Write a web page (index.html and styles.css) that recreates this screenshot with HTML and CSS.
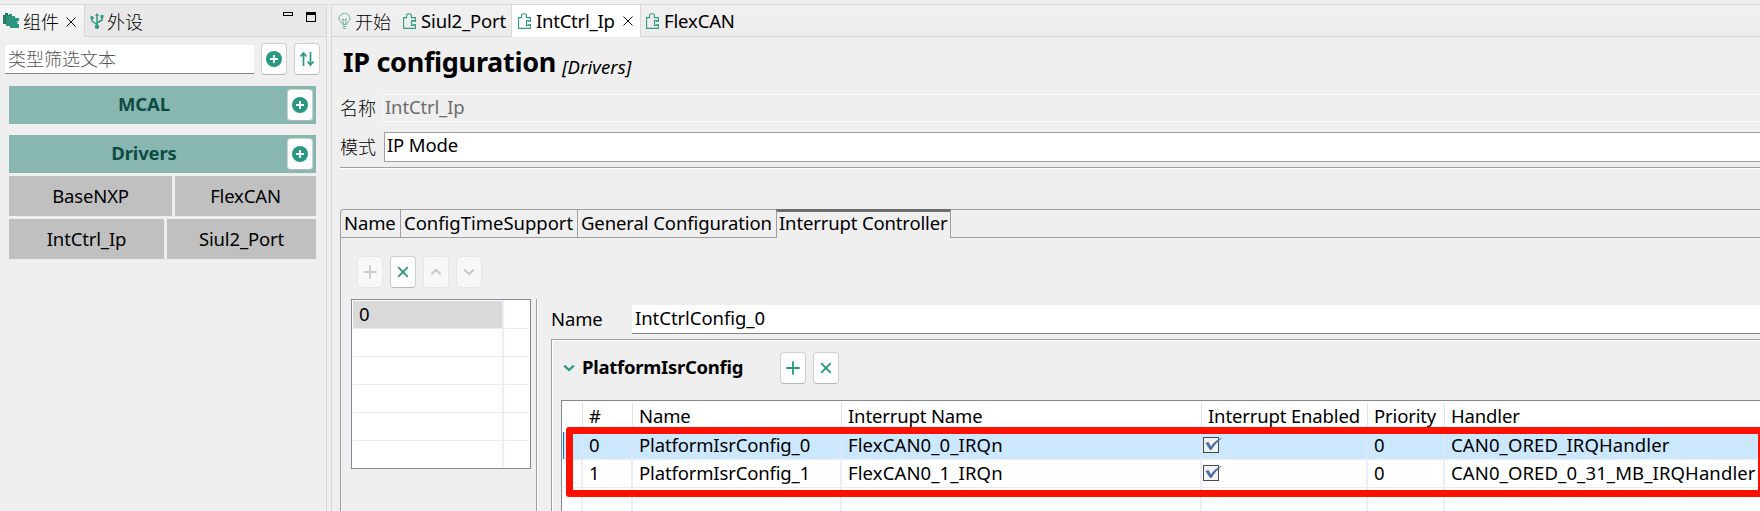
FILE: index.html
```
<!DOCTYPE html>
<html lang="zh">
<head>
<meta charset="utf-8">
<title>IP configuration</title>
<link rel="stylesheet" href="styles.css">
</head>
<body>
<svg class="defs" width="0" height="0">
  <symbol id="puzzle" viewBox="0 0 13 16"><path d="M.6 4.600H3.600V2.500Q3.600 .800 6 .800T8.400 2.500V4.600H12.400V8.400H11V7.600H8.500V12.400H11V11.600H12.400V15.400H.6Z" fill="none" stroke="#339a83" stroke-width="1.1"/></symbol>
  <symbol id="plus-circle" viewBox="0 0 16 16"><circle cx="8" cy="8" r="8" fill="#2a9880"/><path d="M8 4V12M4 8H12" stroke="#fff" stroke-width="1.8"/></symbol>
  <symbol id="plus" viewBox="0 0 14 14"><path d="M7 .3V13.7M.3 7H13.7" stroke="currentColor" stroke-width="1.8"/></symbol>
  <symbol id="cross" viewBox="0 0 12 12"><path d="M1.2 1.2 10.8 10.8M10.8 1.2 1.2 10.8" stroke="currentColor" stroke-width="1.9"/></symbol>
  <symbol id="down" viewBox="0 0 12 8"><path d="M1.2 1.6 6 6 10.8 1.6" fill="none" stroke="currentColor" stroke-width="2.2"/></symbol>
  <symbol id="up" viewBox="0 0 12 8"><path d="M1.2 6.4 6 2 10.8 6.4" fill="none" stroke="currentColor" stroke-width="2.2"/></symbol>
  <symbol id="close" viewBox="0 0 10 10"><path d="M.5 .5 9.5 9.5M9.5 .5 .5 9.5" stroke="#111" stroke-width="1"/></symbol>
  <symbol id="check" viewBox="0 0 20 18"><rect x=".5" y="2.5" width="15" height="15" fill="#f3f3f3" stroke="#4a4a4a"/><path d="M2.500 8 5.500 7 8 11.500Q12 5 19.500 2.500Q12.500 8 8.500 15H7Z" fill="#4a6fa5"/></symbol>
</svg>
<div class="app">
  <aside class="side">
    <div class="side-tabs">
      <div class="side-tab active">
        <svg class="i-comp" viewBox="0 0 17 16"><path d="M0 2H2V0H5V2H7V11H0Z" fill="#1f7d68"/><path d="M4 3H6V1H9V3H12V13H3V4Z" fill="#2f8f79"/><path d="M7 5H9V3H12V5H16V8H14.500V11H16V15H7Z" fill="#2a9880"/></svg>
        <span class="cjk">组件</span>
        <svg class="i-close"><use href="#close"/></svg>
      </div>
      <div class="side-rest">
        <svg class="i-usb" viewBox="0 0 14 16"><g fill="none" stroke="#339a83" stroke-width="1.5"><path d="M7 2V14M2 5V8L7 11.500M12 4V7L7 10"/></g><path d="M7 0 9 3H5Z" fill="#339a83"/><circle cx="7" cy="13.700" r="2.200" fill="#339a83"/><circle cx="2" cy="4.700" r="1.700" fill="#339a83"/><rect x="10.500" y="2" width="3" height="3" fill="#339a83"/></svg>
        <span class="cjk">外设</span>
        <i class="w-min"></i><i class="w-max"></i>
      </div>
    </div>
    <div class="filter">
      <div class="filter-in cjk">类型筛选文本</div>
      <div class="btn"><svg class="s16"><use href="#plus-circle"/></svg></div>
      <div class="btn"><svg class="i-sort" viewBox="0 0 14 16"><path d="M3.500 15V3M.5 5.500 3.500 2 6.500 5.500M10.500 1V13M7.500 10.500 10.500 14 13.500 10.500" fill="none" stroke="#2a9880" stroke-width="1.700"/></svg></div>
    </div>
    <div class="cat"><b>MCAL</b><div class="btn"><svg class="s16"><use href="#plus-circle"/></svg></div></div>
    <div class="cat second"><b>Drivers</b><div class="btn"><svg class="s16"><use href="#plus-circle"/></svg></div></div>
    <div class="comps"><div class="comp c-base">BaseNXP</div><div class="comp">FlexCAN</div></div>
    <div class="comps"><div class="comp c-int">IntCtrl_Ip</div><div class="comp">Siul2_Port</div></div>
  </aside>
  <main class="editor">
    <nav class="ed-tabs">
      <div class="ed-tab t-start"><svg class="i-bulb" viewBox="0 0 13 16"><g fill="none" stroke="#6db3a4" stroke-width="1"><path d="M4.500 11.500C4.500 9.500 1 8.500 1 5.500A5.300 5 0 0 1 12 5.500C12 8.500 8.500 9.500 8.500 11.500ZM4.500 13.500H8.500M5 15.400H8M5.500 11 4.500 6 6.500 7 8.500 6 7.500 11"/></g></svg><span class="cjk">开始</span></div>
      <div class="ed-tab t-port"><svg class="i-puz"><use href="#puzzle"/></svg><span>Siul2_Port</span></div>
      <div class="ed-tab t-int"><svg class="i-puz"><use href="#puzzle"/></svg><span>IntCtrl_Ip</span><svg class="i-close"><use href="#close"/></svg></div>
      <div class="ed-tab t-flex"><svg class="i-puz"><use href="#puzzle"/></svg><span>FlexCAN</span></div>
    </nav>
    <header class="title"><h1>IP configuration</h1><em>[Drivers]</em></header>
    <div class="row r-name"><span class="lab cjk">名称</span><div class="ro">IntCtrl_Ip</div></div>
    <div class="row r-mode"><span class="lab cjk">模式</span><div class="combo">IP Mode</div></div>
    <div class="tabs"><div class="tab t1"><span>Name</span></div><div class="tab t2"><span>ConfigTimeSupport</span></div><div class="tab t3"><span>General Configuration</span></div><div class="tab t4"><span>Interrupt Controller</span></div><div class="tab-rest"></div></div>
    <section class="page">
      <div class="tools">
        <div class="btn off"><svg class="s14"><use href="#plus"/></svg></div>
        <div class="btn"><svg class="s12"><use href="#cross"/></svg></div>
        <div class="btn off"><svg class="chev"><use href="#up"/></svg></div>
        <div class="btn off"><svg class="chev"><use href="#down"/></svg></div>
      </div>
      <div class="split">
        <div class="list">
          <div class="li sel"><span>0</span><i></i></div>
          <div class="li"><span></span><i></i></div><div class="li"><span></span><i></i></div><div class="li"><span></span><i></i></div><div class="li"><span></span><i></i></div>
          <div class="li last"><span></span><i></i></div>
        </div>
        <div class="detail">
          <div class="name-row"><span class="name-lab">Name</span><div class="name-in">IntCtrlConfig_0</div></div>
          <div class="group">
            <div class="g-head"><svg class="g-chev"><use href="#down"/></svg><b>PlatformIsrConfig</b><div class="btn"><svg class="s14"><use href="#plus"/></svg></div><div class="btn"><svg class="s12"><use href="#cross"/></svg></div></div>
            <div class="table">
              <div class="tr th"><div></div><div>#</div><div>Name</div><div>Interrupt Name</div><div>Interrupt Enabled</div><div>Priority</div><div>Handler</div></div>
              <div class="tr on"><div></div><div>0</div><div>PlatformIsrConfig_0</div><div class="wide">FlexCAN0_0_IRQn</div><div class="ck"><svg><use href="#check"/></svg></div><div>0</div><div class="wide">CAN0_ORED_IRQHandler</div></div>
              <div class="tr"><div></div><div>1</div><div>PlatformIsrConfig_1</div><div class="wide">FlexCAN0_1_IRQn</div><div class="ck"><svg><use href="#check"/></svg></div><div>0</div><div class="wide">CAN0_ORED_0_31_MB_IRQHandler</div></div>
              <div class="tr"><div></div><div></div><div></div><div></div><div></div><div></div><div></div></div>
              <div class="mark"></div>
            </div>
          </div>
        </div>
      </div>
    </section>
  </main>
</div>
</body>
</html>
```
FILE: styles.css
```
* { box-sizing: border-box; }
html { height: 511px; overflow: hidden; }
body { margin: 0; height: 511px; background: #efefef; color: #000; font: 18.5px/24px "Noto Sans", "Noto Sans CJK SC", sans-serif; letter-spacing: -0.15px; white-space: nowrap; overflow: hidden; }
svg { display: block; flex: none; }
.defs { position: absolute; }
.cjk { font-family: "Noto Sans CJK SC", sans-serif; font-size: 18px; letter-spacing: 0; font-weight: 300; }
.app { display: flex; height: 511px; padding-top: 4px; overflow: hidden; }

.btn { width: 26px; height: 32px; flex: none; display: flex; align-items: center; justify-content: center; background: #fdfdfd; border: 1px solid #d0d0d0; border-bottom-color: #b8b8b8; border-radius: 4px; color: #2a9880; }
.btn.off { background: #f8f8f8; border-color: #e6e6e6; color: #cbcbcb; }
.s16 { width: 16px; height: 16px; }
.s14 { width: 14px; height: 14px; }
.s12 { width: 12px; height: 12px; }
.chev { width: 12px; height: 8px; }
.i-close { width: 10px; height: 10px; }
.i-puz { width: 13px; height: 16px; margin-top: -1px; }
.i-sort { width: 14px; height: 16px; }

.side { width: 327px; border-top: 1px solid #d9d9d9; border-right: 1px solid #d9d9d9; flex: none; }
.side-tabs { display: flex; height: 32px; }
.side-tab { width: 84px; display: flex; align-items: center; padding-left: 3px; background: linear-gradient(#f7f7f7, #efefef); }
.i-comp { width: 17px; height: 16px; margin-right: 3px; }
.side-tab .i-close { margin-left: 7px; margin-top: 1px; }
.side-rest { flex: 1; display: flex; align-items: center; padding-left: 5px; background: #e8e8e8; border-left: 1px solid #d9d9d9; border-bottom: 1px solid #d4d4d4; }
.i-usb { width: 14px; height: 16px; margin-right: 3px; }
.w-min { width: 10px; height: 4px; border: 1px solid #000; margin-left: 140px; margin-top: -14px; }
.w-max { width: 10px; height: 10px; border: 1px solid #000; border-top-width: 3px; margin-left: 13px; margin-top: -8px; }
.filter { display: flex; align-items: center; padding: 6px 0 0 5px; height: 38px; }
.filter-in { width: 249px; height: 29px; background: #fff; border-bottom: 1px solid #858585; color: #555; padding: 1px 0 0 3px; }
.filter .btn { margin-left: 7px; }
.cat { display: flex; align-items: center; justify-content: flex-end; margin: 11px 0 0 9px; width: 307px; height: 38px; background: #87b7b0; padding-right: 3px; }
.cat b { flex: 1; text-align: center; color: #0c4c43; padding: 0 8px 2px 0; }
.second { margin-top: 11px; }
.comps { display: flex; gap: 3px; margin: 3px 0 0 9px; width: 307px; height: 40px; }
.comp { flex: 1; background: #c0c0c0; text-align: center; line-height: 39px; }
.c-base { flex: 0 0 163px; }
.c-int { flex: 0 0 155px; }

.editor { flex: 1; min-width: 0; margin-left: 4px; border: solid #d9d9d9; border-width: 1px 0 0 1px; display: flex; flex-direction: column; }
.ed-tabs { display: flex; height: 32px; flex: none; background: linear-gradient(#f0f0f0, #ededed); box-shadow: inset 0 -1px #d4d4d4; }
.ed-tab { display: flex; align-items: center; flex: none; gap: 5px; }
.t-start { width: 71px; padding-left: 6px; gap: 4px; }
.i-bulb { width: 13px; height: 16px; }
.t-port { width: 108px; }
.t-int { width: 130px; padding-left: 6px; background: #fff; border: solid #d9d9d9; border-width: 0 1px; }
.t-int span { letter-spacing: -0.25px; }
.t-int .i-close { margin-left: 3px; }
.t-flex { padding-left: 5px; }
.title { display: flex; height: 57px; padding: 6px 0 0 11px; flex: none; align-items: baseline; }
.title h1 { margin: 0; font-size: 27px; line-height: 38px; letter-spacing: -0.29px; }
.title em { margin-left: 6px; font-size: 18.500px; line-height: 20px; position: relative; top: 2px; letter-spacing: 0.1px; }
.row { display: flex; align-items: center; padding-left: 8px; flex: none; }
.lab { width: 42px; margin-top: -2px; }
.r-name { height: 27px; }
.ro { flex: 1; height: 28px; border: solid #fafafa; border-width: 1px 0 1px 1px; color: #6d6d6d; padding-left: 2px; }
.r-mode { margin-top: 11px; height: 30px; }
.r-mode .lab { width: 44px; }
.combo { flex: 1; height: 30px; background: #fff; border: solid #a0a0a0; border-width: 1px 0 1px 1px; padding: 0 0 0 2px; }
.tabs { display: flex; flex: none; height: 71px; margin: 5px 0 0 8px; padding-top: 41px; border-top: 1px solid #a0a0a0; box-shadow: inset 0 1px #fff; }
.tab { flex: none; height: 29px; border: solid #a0a0a0; border-width: 1px 0 1px 1px; padding: 1px 0 0 3px; }
.t1 { width: 60px; border-top-left-radius: 4px; }
.t2 { width: 177px; letter-spacing: -0.02px; }
.t3 { width: 199px; letter-spacing: -0.1px; }
.t4 { width: 175px; border-width: 3px 1px 0; border-top-color: #6d6d6d; padding: 0 0 0 2px; line-height: 22px; }
.tab-rest { flex: 1; height: 29px; border: solid #a0a0a0; border-width: 1px 0; }
.page { flex: 1; margin-left: 8px; border-left: 1px solid #a0a0a0; padding-top: 18px; }
.tools { display: flex; gap: 7px; padding-left: 16px; }
.split { display: flex; margin: 11px 0 0 10px; height: 212px; }
.list { width: 180px; height: 170px; border: 1px solid #828790; background: #fff; padding: 1px; flex: none; }
.li { display: flex; height: 28px; border-bottom: 1px solid #ececec; }
.li span { width: 151px; border-right: 2px solid #e8effa; padding: 1px 0 0 6px; }
.sel span { background: #d9d9d9; }
.last { border: 0; height: 26px; }
.detail { flex: 1; min-width: 0; margin-left: 5px; border-left: 1px solid #a0a0a0; box-shadow: inset 1px 0 #fff; padding: 6px 0 0 14px; }
.name-row { display: flex; align-items: center; height: 29px; }
.name-lab { width: 81px; margin-top: -2px; }
.name-in { flex: 1; height: 29px; background: #fff; border-bottom: 1px solid #858585; padding: 1px 0 0 3px; letter-spacing: -0.05px; }
.group { margin-top: 5px; border: solid #a0a0a0; border-width: 1px 0 0 1px; box-shadow: inset 1px 1px #fff; height: 172px; padding: 12px 0 0 9px; }
.g-head { display: flex; align-items: center; height: 32px; padding-left: 2px; }
.g-chev { width: 12px; height: 8px; margin-right: 7px; color: #2a9880; }
.g-head b { width: 198px; margin-top: -3px; letter-spacing: -0.27px; }
.g-head .btn { margin-right: 7px; }
.table { position: relative; margin-top: 16px; height: 112px; background: #fff; border: solid #828790; border-width: 1px 0 0 1px; padding: 2px 0 0 1px; }
.tr { display: grid; grid-template-columns: 20px 50px 209px 360px 166px 77px 1fr; height: 28px; border-bottom: 1px solid #ececec; }
.tr > div { border-right: 2px solid #e8effa; padding: 1px 0 0 6px; }
.tr > div:last-child { border-right: 0; }
.tr.th { height: 29px; border: 0; }
.th > div { border-right: 1px solid #e2e2e2; padding-top: 1px; }
.tr .wide { letter-spacing: 0.11px; }
.on { background: #cce8ff; box-shadow: inset 1px 0 #0078d7; }
.on > div { border-right-color: #d8e8fa; }
.tr .ck { padding: 3px 0 0 1px; }
.ck svg { width: 20px; height: 18px; }
.mark { position: absolute; left: 4px; top: 26px; width: 1199px; height: 70px; border: 7px solid #ff1000; border-radius: 3px; }
```
